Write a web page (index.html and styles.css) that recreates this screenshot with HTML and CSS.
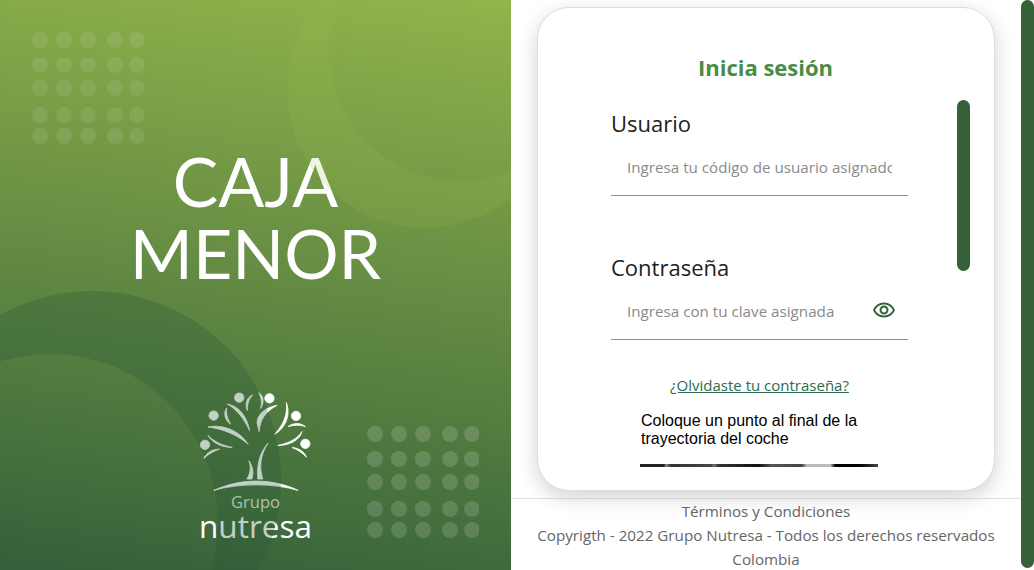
FILE: index.html
```html
<!DOCTYPE html>
<html>
  <head>
    <title>Caja Menor</title>
    <link rel="stylesheet" href="styles.css">
  </head>
  <body>
    <div class="banner">
      <h1 class="banner-title">CAJA<br>MENOR</h1>

      <div class="logo">
        <svg class="logo-tree" viewBox="50 30 350 310">
          <g class="tree-shapes">
            <circle cx="176" cy="53" r="14"/>
            <circle cx="267" cy="55" r="14"/>
            <circle cx="99" cy="107" r="14"/>
            <circle cx="347" cy="108" r="14"/>
            <circle cx="375" cy="192" r="14"/>
            <circle cx="73" cy="195" r="14"/>
            <path d="M140 72C175 78 200 110 207 152C190 115 170 90 140 72Z"/>
            <path d="M200 92C192 70 200 52 216 45C205 58 200 72 200 92Z"/>
            <path d="M235 38C250 50 252 70 240 86C245 70 243 55 235 38Z"/>
            <path d="M290 76C255 82 228 105 230 130L236 155C238 120 255 95 290 76Z"/>
            <path d="M138 84C128 100 132 120 150 133C140 115 136 100 138 84Z"/>
            <path d="M82 141C125 133 175 150 203 193C170 165 130 148 82 141Z"/>
            <path d="M318 68C332 105 315 145 283 163C308 135 322 105 318 68Z"/>
            <path d="M323 140C340 128 360 128 375 140C358 134 342 135 323 140Z"/>
            <path d="M365 155C358 180 330 197 292 197C325 190 350 178 365 155Z"/>
            <path d="M335 203C355 205 372 215 378 232C365 218 352 210 335 203Z"/>
            <path d="M82 167C95 190 125 203 155 203C125 197 100 185 82 167Z"/>
            <path d="M70 235C78 218 95 208 117 208C100 213 85 222 70 235Z"/>
            <path d="M263 190C240 215 228 250 232 298L247 298C235 260 240 225 263 190Z"/>
            <path d="M205 243C218 262 220 280 214 298L199 298C210 280 212 262 205 243Z"/>
            <path d="M100 332C180 295 275 295 353 332C280 310 175 310 100 332Z"/>
          </g>
        </svg>
        <span class="logo-group">Grupo</span>
        <span class="logo-name">nutresa</span>
      </div>

      <!-- rings and dots sit above the title and logo, they tint them a little -->
      <svg class="banner-decor" viewBox="0 0 511 570">
        <defs>
          <g id="dot-grid">
            <circle cx="8" cy="8" r="8"/><circle cx="32" cy="8" r="8"/><circle cx="56" cy="8" r="8"/><circle cx="83" cy="8" r="8"/><circle cx="105" cy="8" r="8"/>
            <circle cx="8" cy="33" r="8"/><circle cx="32" cy="33" r="8"/><circle cx="56" cy="33" r="8"/><circle cx="83" cy="33" r="8"/><circle cx="105" cy="33" r="8"/>
            <circle cx="8" cy="56" r="8"/><circle cx="32" cy="56" r="8"/><circle cx="56" cy="56" r="8"/><circle cx="83" cy="56" r="8"/><circle cx="105" cy="56" r="8"/>
            <circle cx="8" cy="83" r="8"/><circle cx="32" cy="83" r="8"/><circle cx="56" cy="83" r="8"/><circle cx="83" cy="83" r="8"/><circle cx="105" cy="83" r="8"/>
            <circle cx="8" cy="104" r="8"/><circle cx="32" cy="104" r="8"/><circle cx="56" cy="104" r="8"/><circle cx="83" cy="104" r="8"/><circle cx="105" cy="104" r="8"/>
          </g>
          <clipPath id="grid-clip"><rect width="112" height="112"/></clipPath>
        </defs>
        <path class="ring-top" fill-rule="evenodd" d="M287 90a138 138 0 1 0 276 0a138 138 0 1 0 -276 0ZM329 50a131 131 0 1 0 262 0a131 131 0 1 0 -262 0Z"/>
        <path class="ring-bottom" fill-rule="evenodd" d="M-97 480a189 189 0 1 0 378 0a189 189 0 1 0 -378 0ZM-118 522a168 168 0 1 0 336 0a168 168 0 1 0 -336 0Z"/>
        <g class="dots-top" transform="translate(32 32)" clip-path="url(#grid-clip)"><use href="#dot-grid"/></g>
        <g class="dots-bottom" transform="translate(367 426)" clip-path="url(#grid-clip)"><use href="#dot-grid"/></g>
      </svg>
    </div>

    <div class="main">
      <div class="card">
        <div class="card-thumb"></div>
        <h2 class="card-title">Inicia sesión</h2>
        <div class="card-form">
          <label class="field-label">Usuario</label>
          <div class="field">
            <input class="field-input" placeholder="Ingresa tu código de usuario asignado">
          </div>

          <label class="field-label field-label-second">Contraseña</label>
          <div class="field">
            <input class="field-input" placeholder="Ingresa con tu clave asignada">
            <svg class="eye-icon" viewBox="0 0 24 24">
              <path d="M12 6.5c3.79 0 7.17 2.13 8.82 5.5-1.65 3.37-5.02 5.5-8.82 5.5S4.83 15.37 3.18 12C4.83 8.63 8.21 6.5 12 6.5m0-2C7 4.5 2.73 7.61 1 12c1.73 4.39 6 7.5 11 7.5s9.27-3.11 11-7.5c-1.73-4.39-6-7.5-11-7.5zm0 5c1.38 0 2.5 1.12 2.5 2.5s-1.12 2.5-2.5 2.5-2.5-1.12-2.5-2.5 1.12-2.5 2.5-2.5m0-2c-2.48 0-4.5 2.02-4.5 4.5s2.02 4.5 4.5 4.5 4.5-2.02 4.5-4.5-2.02-4.5-4.5-4.5z"/>
            </svg>
          </div>

          <a class="forgot-link" href="#">¿Olvidaste tu contraseña?</a>

          <p class="captcha-text">Coloque un punto al final de la trayectoria del coche</p>
          <div class="captcha-strip"></div>
        </div>
      </div>

      <div class="footer">
        <div>Términos y Condiciones</div>
        <div>Copyrigth - 2022 Grupo Nutresa - Todos los derechos reservados</div>
        <div>Colombia</div>
      </div>
    </div>

    <div class="page-scroll">
      <div class="page-thumb"></div>
    </div>
  </body>
</html>
```

FILE: styles.css
```css
* {
  box-sizing: border-box;
}

body {
  margin: 0;
  height: 570px;
  overflow: hidden;
  display: flex;
  background-color: white;
  font-family: "Open Sans", "Noto Sans", sans-serif;
}

.banner {
  position: relative;
  width: 511px;
  height: 570px;
  flex-shrink: 0;
  display: flex;
  flex-direction: column;
  align-items: center;
  background: linear-gradient(188deg, #91b44b 0%, #34603a 100%);
}

.banner-title {
  margin: 0;
  padding-top: 145px;
  color: white;
  font-family: Lato, sans-serif;
  font-size: 68px;
  font-weight: 400;
  line-height: 72px;
  text-align: center;
}

.banner-decor {
  position: absolute;
  left: 0;
  top: 0;
  width: 511px;
  height: 570px;
}

.ring-top {
  fill: #9abf50;
  fill-opacity: 0.17;
}

.ring-bottom {
  fill: #265536;
  fill-opacity: 0.28;
}

.dots-top {
  fill: white;
  fill-opacity: 0.09;
}

.dots-bottom {
  fill: white;
  fill-opacity: 0.15;
}

.logo {
  margin-top: 101px;
  display: flex;
  flex-direction: column;
  align-items: center;
  color: white;
}

.logo-tree {
  width: 117px;
  height: 103px;
}

.tree-shapes {
  fill: white;
  stroke: white;
  stroke-width: 2.5;
  stroke-linejoin: round;
}

.logo-group {
  font-size: 16.5px;
  line-height: 18px;
  color: #dfe6dc;
}

.logo-name {
  font-size: 31.5px;
  line-height: 30px;
  font-weight: 500;
}

.main {
  width: 510px;
  height: 570px;
  display: flex;
  flex-direction: column;
}

.card {
  position: relative;
  width: 458px;
  height: 484px;
  margin-top: 7px;
  margin-left: 25.5px;
  flex-shrink: 0;
  padding-top: 45px;
  border: 1px solid #dedede;
  border-radius: 32px;
  box-shadow: 0 6px 20px rgba(0, 0, 0, 0.18);
  background-color: white;
}

.card-thumb {
  position: absolute;
  left: 419.5px;
  top: 92px;
  width: 13px;
  height: 171px;
  border-radius: 7px;
  background-color: #356139;
}

.card-title {
  margin: 0;
  color: #4a8c45;
  font-size: 22px;
  font-weight: 700;
  line-height: 28px;
  text-align: center;
}

.card-form {
  display: flex;
  flex-direction: column;
  width: 297px;
  margin-left: 73.5px;
  margin-top: 27px;
}

.field-label {
  color: #222;
  font-size: 22px;
  line-height: 30px;
}

.field-label-second {
  margin-top: 56px;
}

.field {
  display: flex;
  align-items: center;
  height: 58px;
  padding: 0 12px 0 16px;
  border-bottom: 1px solid #8f8f8f;
}

.field-input {
  flex: 1;
  min-width: 0;
  height: 30px;
  padding: 0;
  margin-right: 4px;
  border: none;
  outline: none;
  font-family: inherit;
  font-size: 15.2px;
  color: #333;
}

.field-input::placeholder {
  color: #8a8a8a;
  opacity: 1;
}

.eye-icon {
  width: 24px;
  height: 24px;
  flex-shrink: 0;
  margin-bottom: 2px;
  fill: #356139;
}

.forgot-link {
  margin-top: 34px;
  color: #2e6b52;
  font-size: 15px;
  line-height: 22px;
  text-align: center;
}

.captcha-text {
  margin: 16px 0 0 30px;
  width: 238px;
  color: black;
  font-family: "Liberation Sans", sans-serif;
  font-size: 16px;
  line-height: 18px;
}

.captcha-strip {
  width: 238px;
  height: 3px;
  margin: 16px 0 0 29px;
  background: linear-gradient(90deg, #222 0%, #222 10%, #888 11%, #333 13%, #444 30%, #777 31%, #333 33%, #111 50%, #555 55%, #444 68%, #bbb 70%, #bbb 80%, #000 82%, #000 92%, #444 100%);
}

.footer {
  flex: 1;
  width: 100%;
  margin-top: 7px;
  border-top: 1px solid #e2e2e2;
  color: #666;
  font-size: 15.2px;
  line-height: 24px;
  text-align: center;
}

.page-scroll {
  width: 13px;
  height: 570px;
  flex-shrink: 0;
}

.page-thumb {
  height: 568px;
  border-radius: 7px;
  background-color: #356139;
}
```
